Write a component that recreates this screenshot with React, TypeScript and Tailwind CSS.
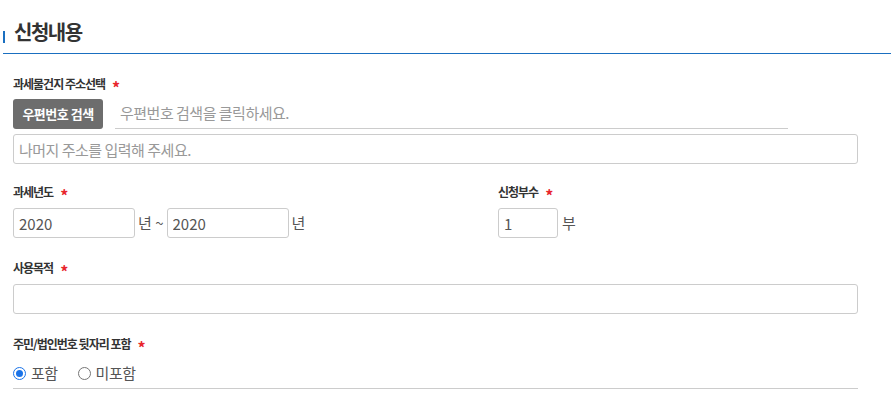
import React from 'react';

function Label({ text }: { text: string }) {
  return (
    <div className="flex items-center h-[14px] text-[12px] font-bold tracking-[-1px] text-[#333]">
      {text}
      <span className="ml-[7px] text-[#e8262d] text-[16px] leading-none mt-[6px]">*</span>
    </div>
  );
}

export default function App() {
  const input = 'h-[30px] border border-[#cccccc] rounded-[3px] px-[5px] text-[15px] text-[#555] outline-none bg-white';
  return (
    <div
      className="w-[891px] h-[397px] bg-white overflow-hidden"
      style={{ fontFamily: '"Noto Sans CJK KR", "Noto Sans", sans-serif' }}
    >
      {/* Title */}
      <div className="pl-[3px] pt-[20px]">
        <div className="flex items-center h-[24px]">
          <span className="w-[2px] h-[12px] bg-[#1a6fc0] mt-[10px]" />
          <h2 className="ml-[9px] text-[20px] font-bold tracking-[-1.5px] text-[#333] leading-none">신청내용</h2>
        </div>
        <div className="mt-[9px] h-[1px] bg-[#1a6fc0] w-full" />
      </div>

      <div className="pl-[13px] w-[858px]">
        {/* Address */}
        <div className="mt-[23px]">
          <Label text="과세물건지 주소선택" />
          <div className="flex items-end mt-[8px]">
            <button className="w-[90px] h-[30px] bg-[#6d6d6d] text-white text-[13px] font-bold rounded-[3px] tracking-[-0.5px]">
              우편번호 검색
            </button>
            <div className="ml-[12px] w-[673px] h-[30px] border-b border-[#cccccc] flex items-center pl-[5px] text-[15px] text-[#999] tracking-[-0.5px]">
              우편번호 검색을 클릭하세요.
            </div>
          </div>
          <input
            className={`${input} w-full mt-[5px] placeholder:text-[#999] tracking-[-0.5px]`}
            placeholder="나머지 주소를 입력해 주세요."
          />
        </div>

        {/* Year / copies */}
        <div className="flex mt-[21px]">
          <div className="w-[485px]">
            <Label text="과세년도" />
            <div className="flex items-center mt-[9px] text-[15px] text-[#555]">
              <input className={`${input} w-[122px]`} defaultValue="2020" />
              <span className="ml-[3px] mr-[3px]">년 ~</span>
              <input className={`${input} w-[122px]`} defaultValue="2020" />
              <span className="ml-[3px]">년</span>
            </div>
          </div>
          <div>
            <Label text="신청부수" />
            <div className="flex items-center mt-[9px] text-[15px] text-[#555]">
              <input className={`${input} w-[60px]`} defaultValue="1" />
              <span className="ml-[4px]">부</span>
            </div>
          </div>
        </div>

        {/* Purpose */}
        <div className="mt-[23px]">
          <Label text="사용목적" />
          <input className={`${input} w-full mt-[9px]`} />
        </div>

        {/* Resident number */}
        <div className="mt-[23px]">
          <Label text="주민/법인번호 뒷자리 포함" />
          <div className="flex items-center h-[30px] mt-[8px] text-[15px] text-[#555] border-b border-[#cccccc] tracking-[-0.5px]">
            <label className="flex items-center">
              <span className="w-[13px] h-[13px] rounded-full border border-[#1a73e8] flex items-center justify-center">
                <span className="w-[7px] h-[7px] rounded-full bg-[#1a73e8]" />
              </span>
              <span className="ml-[5px]">포함</span>
            </label>
            <label className="flex items-center ml-[20px]">
              <span className="w-[13px] h-[13px] rounded-full border border-[#767676]" />
              <span className="ml-[5px]">미포함</span>
            </label>
          </div>
        </div>
      </div>
    </div>
  );
}
